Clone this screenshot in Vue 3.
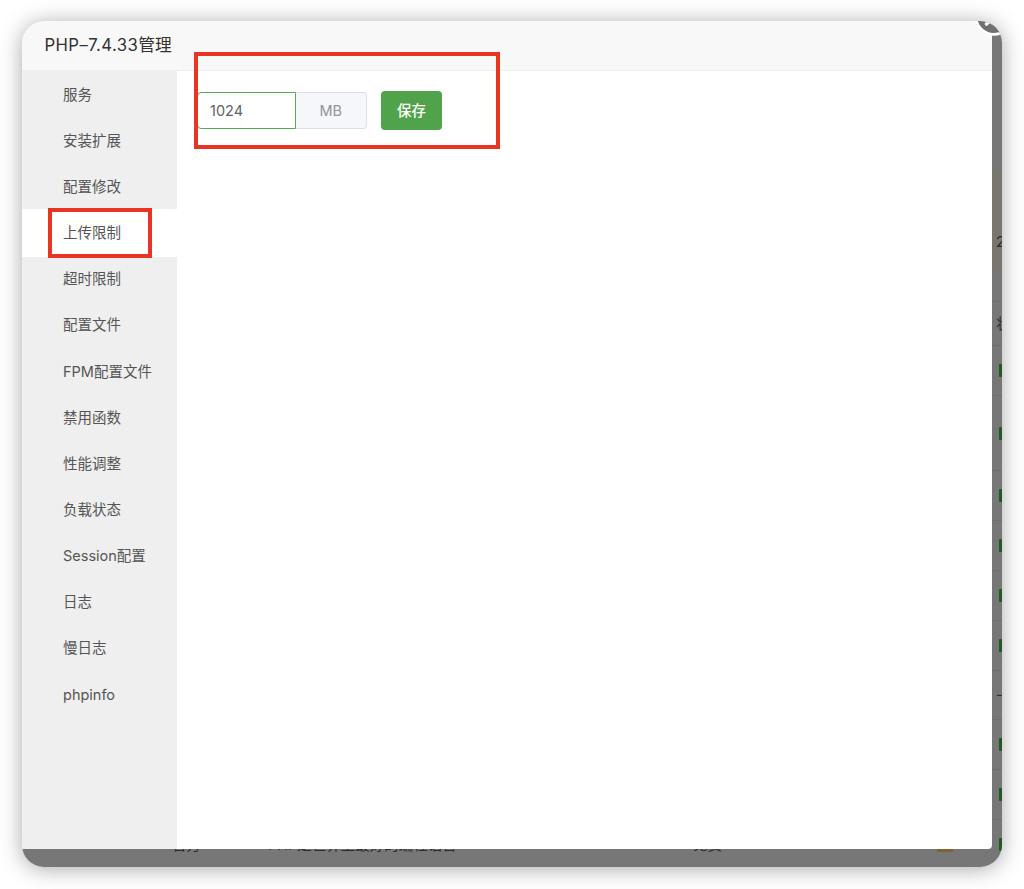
<template>
	<div class="stage">
		<div class="window">
			<div class="backdrop">
				<div class="banner"><span>2</span></div>
				<div class="gap"></div>
				<div
					v-for="(row, i) in rows"
					:key="i"
					class="soft-row"
					:style="{ height: row.height + 'px' }"
				>
					<span>{{ row.vendor }}</span>
					<span>{{ row.desc }}</span>
					<span>{{ row.price }}</span>
					<span><i v-if="row.folder" class="folder"></i></span>
					<span class="status">
						<i v-if="row.running" class="running"></i>
						<template v-else>{{ row.status }}</template>
					</span>
				</div>
			</div>

			<section class="dialog">
				<header class="dialog-header">
					<h1><span class="latin">PHP–7.4.33</span>管理</h1>
				</header>
				<div class="dialog-body">
					<nav class="menu">
						<a
							v-for="item in menu"
							:key="item"
							:class="['menu-item', { active: item === current }]"
							@click="current = item"
						>{{ item }}</a>
					</nav>
					<main class="content">
						<div class="limit-form">
							<div class="input-group">
								<input v-model="limit" type="text">
								<span class="unit">MB</span>
							</div>
							<button class="save-btn">保存</button>
						</div>
					</main>
				</div>
			</section>

			<svg class="close" viewBox="0 0 40 40">
				<circle cx="20" cy="20" r="18.3" fill="#707070" stroke="#fff" stroke-width="2.8" />
				<path d="M12.5 28l15-15M12.5 13l15 15" stroke="#fff" stroke-width="3.4" stroke-linecap="round" />
			</svg>
		</div>

		<div class="mark mark-form"></div>
		<div class="mark mark-menu"></div>
	</div>
</template>

<script setup>
import { ref } from 'vue';

const menu = [
	'服务',
	'安装扩展',
	'配置修改',
	'上传限制',
	'超时限制',
	'配置文件',
	'FPM配置文件',
	'禁用函数',
	'性能调整',
	'负载状态',
	'Session配置',
	'日志',
	'慢日志',
	'phpinfo'
];

const current = ref('上传限制');
const limit = ref('1024');

// Software list behind the dialog, only its edges stay visible
const rows = [
	{ height: 44, status: '状' },
	{ height: 50, running: true },
	{ height: 75, running: true },
	{ height: 50, running: true },
	{ height: 50, running: true },
	{ height: 50, running: true },
	{ height: 50, running: true },
	{ height: 49, status: '--' },
	{ height: 50, running: true },
	{ height: 50, running: true },
	{ height: 50, running: true, vendor: '官方', desc: 'PHP是世界上最好的编程语言', price: '免费', folder: true }
];
</script>

<style>
body {
	background: #fff;
}
</style>

<style scoped>
.stage {
	position: relative;
	height: 889px;
	overflow: hidden;
	font-family: Inter, "Noto Sans CJK SC", sans-serif;
	font-size: 14.5px;
	color: #555;
}

.window {
	position: relative;
	width: 980px;
	height: 846px;
	margin: 21px 0 0 22px;
	border-radius: 22px;
	overflow: hidden;
	background: #777;
}

.stage::before {
	content: "";
	position: absolute;
	left: 22px;
	top: 21px;
	width: 980px;
	height: 846px;
	border-radius: 22px;
	box-shadow: 0 2px 22px rgba(0, 0, 0, .34);
}

.backdrop {
	padding-top: 149px;
	color: #2b2b2b;
}

.banner {
	box-sizing: border-box;
	height: 101px;
	padding: 63px 0 0 974px;
	background: #78766f;
}

.gap {
	height: 30px;
}

.soft-row {
	display: grid;
	grid-template-columns: 96px 425px 244px 59px 40px;
	align-items: center;
	box-sizing: border-box;
	padding-left: 150px;
	border-top: 1px solid #6e6e6e;
	white-space: nowrap;
	line-height: 20px;
}

.folder {
	display: block;
	width: 16px;
	height: 14px;
	background: #7d6530;
}

.running {
	display: block;
	width: 10px;
	height: 13px;
	margin-left: 3px;
	border-radius: 1px;
	background: #1f5a20;
}

.dialog {
	position: absolute;
	left: 0;
	top: 0;
	display: flex;
	flex-direction: column;
	width: 970px;
	height: 828px;
	border-radius: 0 0 4px 0;
	overflow: hidden;
	background: #fff;
}

.dialog-header {
	box-sizing: border-box;
	height: 50px;
	padding-left: 22.4px;
	border-bottom: 1px solid #eee;
	background: #f8f8f8;
}

.dialog-header h1 {
	margin: 0;
	font-size: 16.7px;
	font-weight: 400;
	line-height: 48px;
	color: #333;
}

.latin {
	letter-spacing: .45px;
}

.dialog-body {
	display: flex;
	flex: 1;
}

.menu {
	display: flex;
	flex-direction: column;
	width: 155px;
	padding-top: .6px;
	background: #efefef;
}

.menu-item {
	height: 46.17px;
	padding-left: 41px;
	line-height: 46.17px;
	cursor: pointer;
}

.menu-item.active {
	margin: -1px 0;
	padding-top: 1px;
	padding-bottom: 1px;
	background: #fff;
}

.content {
	flex: 1;
	padding: 20px 0 0 20px;
}

.limit-form {
	display: flex;
	align-items: center;
	gap: 14px;
}

.input-group {
	display: flex;
	height: 37px;
}

.input-group input {
	box-sizing: border-box;
	width: 98.5px;
	padding: 0 0 0 12px;
	border: 1px solid #55a855;
	border-radius: 4px 0 0 4px;
	outline: 0;
	font: inherit;
	color: #606266;
}

.unit {
	box-sizing: border-box;
	width: 71.5px;
	border: 1px solid #dcdfe6;
	border-left: 0;
	border-radius: 0 4px 4px 0;
	background: #f5f7fa;
	line-height: 35px;
	text-align: center;
	color: #909399;
}

.save-btn {
	width: 61px;
	height: 39px;
	padding: 0 0 2px;
	border: 0;
	border-radius: 4px;
	background: #50a34a;
	font: inherit;
	font-weight: 500;
	color: #fff;
	cursor: pointer;
}

.close {
	position: absolute;
	left: 952px;
	top: -25px;
	width: 40px;
	height: 40px;
}

/* Highlight frames drawn over the window */
.mark {
	position: absolute;
	box-sizing: border-box;
	border: 4px solid #e93323;
}

.mark-form {
	left: 194px;
	top: 52px;
	width: 306px;
	height: 97px;
}

.mark-menu {
	left: 48px;
	top: 208px;
	width: 104px;
	height: 50px;
}
</style>
